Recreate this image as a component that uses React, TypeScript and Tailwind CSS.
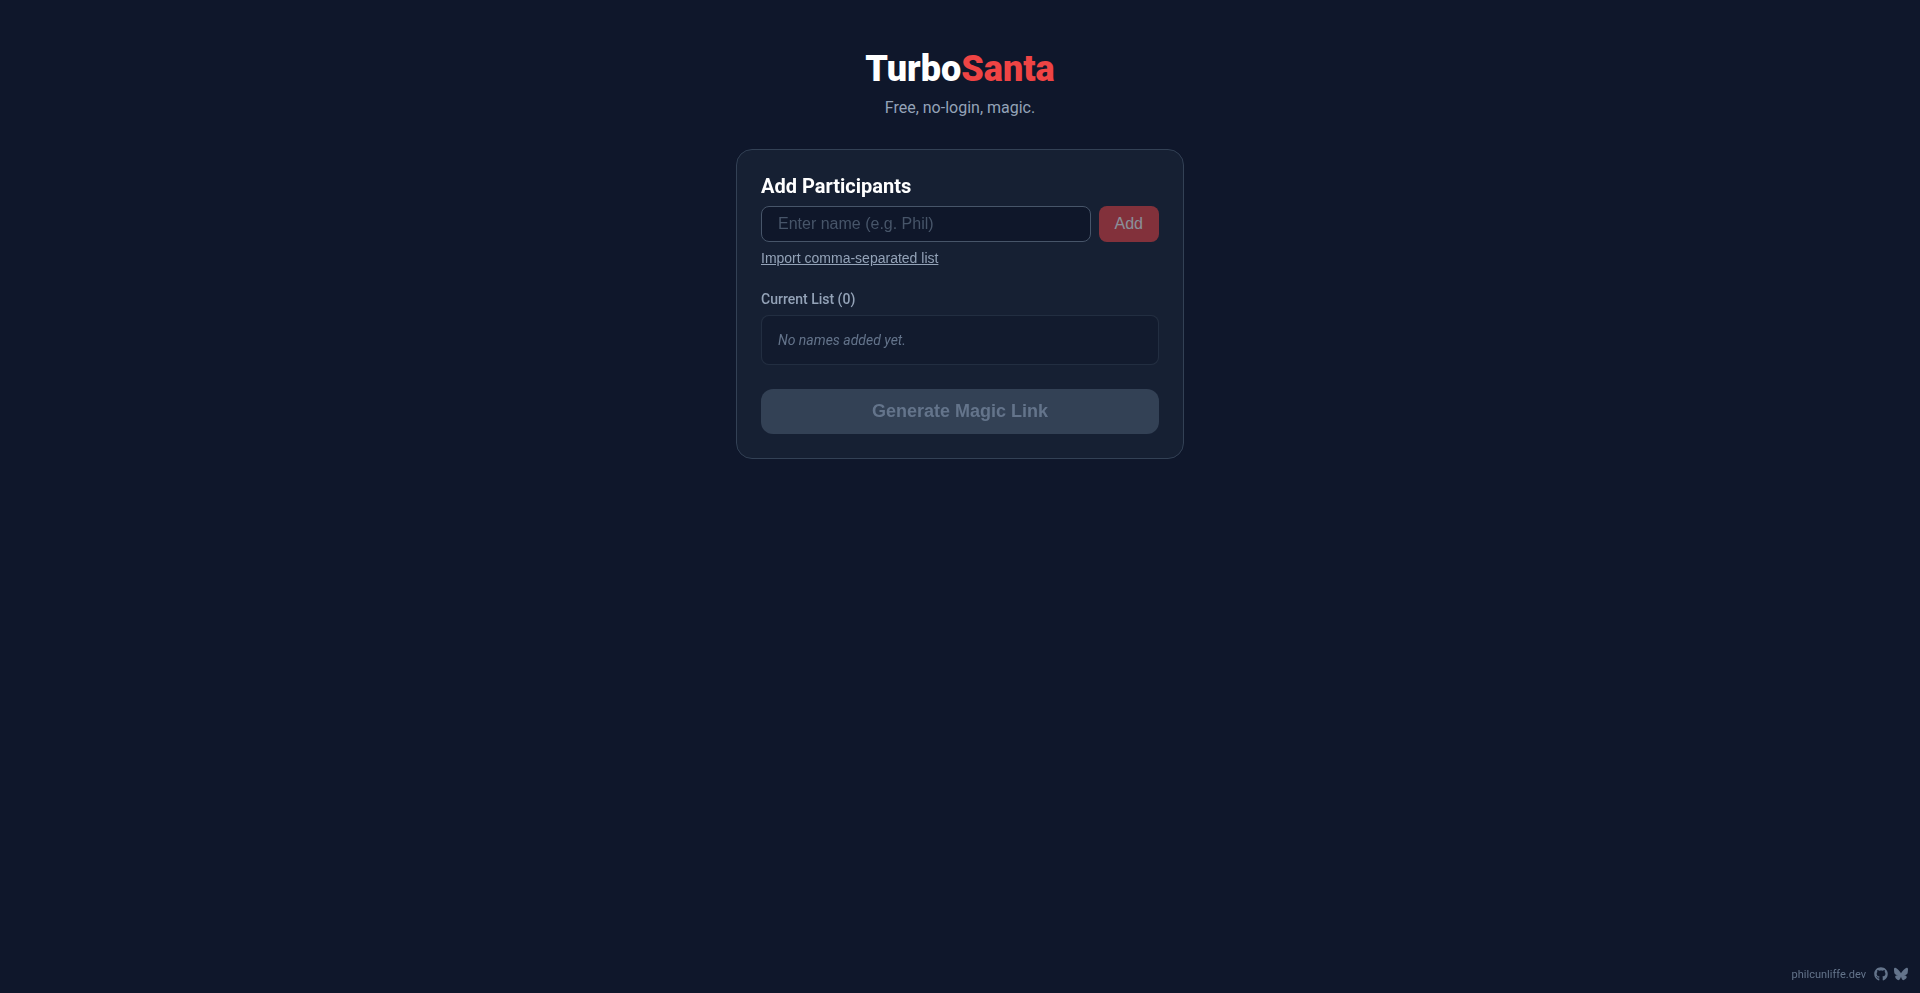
import { useState } from "react";
import type { FormEvent } from "react";
import { FaBluesky, FaGithub } from "react-icons/fa6";

export default function App() {
  const [name, setName] = useState("");
  const [participants, setParticipants] = useState<string[]>([]);

  const handleAdd = (e: FormEvent) => {
    e.preventDefault();
    const trimmed = name.trim();
    if (!trimmed) return;
    setParticipants([...participants, trimmed]);
    setName("");
  };

  return (
    <div className="min-h-screen bg-slate-900 px-4 py-12 font-['Roboto',sans-serif] leading-[normal] text-white">
      <header className="mb-8 text-center">
        <h1 className="mb-2 text-[36px] font-black">
          Turbo<span className="text-[#ef4444]">Santa</span>
        </h1>
        <p className="text-[16px] text-[#94a3b8]">Free, no-login, magic.</p>
      </header>

      <main className="mx-auto flex max-w-md flex-col gap-6 rounded-2xl border border-[#334155] bg-[#1e293b]/50 p-6 backdrop-blur-sm">
        <section>
          <h2 className="mb-2 text-[20px] font-bold">Add Participants</h2>
          <form
            onSubmit={handleAdd}
            className="flex gap-2 font-['Liberation_Sans',sans-serif] text-[16px]"
          >
            <input
              type="text"
              aria-label="Participant name"
              placeholder="Enter name (e.g. Phil)"
              value={name}
              onChange={(e) => setName(e.target.value)}
              className="min-w-0 flex-1 rounded-lg border border-[#475569] bg-[#0f172a] px-4 py-2 outline-none placeholder:text-[#475569]"
            />
            <button
              type="submit"
              disabled={!name.trim()}
              className="rounded-lg bg-[#ef4444] px-4 py-2 disabled:opacity-50"
            >
              Add
            </button>
          </form>
          <button
            type="button"
            className="mt-2 font-['Liberation_Sans',sans-serif] text-[14px] text-[#94a3b8] underline"
          >
            Import comma-separated list
          </button>
        </section>

        <section>
          <h3 className="mb-2 text-[14px] font-medium text-[#94a3b8]">
            Current List ({participants.length})
          </h3>
          <div className="rounded-lg border border-[#334155]/50 bg-[#0f172a]/50 p-4 text-[14px]">
            {participants.length === 0 ? (
              <p className="text-[#64748b] italic">No names added yet.</p>
            ) : (
              <ul>
                {participants.map((participant, i) => (
                  <li key={i}>{participant}</li>
                ))}
              </ul>
            )}
          </div>
        </section>

        <button
          type="button"
          disabled={participants.length < 3}
          className="rounded-xl bg-[#ef4444] py-3 font-['Liberation_Sans',sans-serif] text-[18px] font-bold disabled:bg-[#334155] disabled:text-[#64748b]"
        >
          Generate Magic Link
        </button>
      </main>

      <footer className="fixed right-3 bottom-3 flex items-center gap-2 text-[11px] text-[#64748b]">
        <a href="#site">philcunliffe.dev</a>
        <div className="flex items-center gap-1.5">
          <a href="#github" aria-label="GitHub">
            <FaGithub size={14} />
          </a>
          <a href="#bluesky" aria-label="Bluesky">
            <FaBluesky size={14} />
          </a>
        </div>
      </footer>
    </div>
  );
}
